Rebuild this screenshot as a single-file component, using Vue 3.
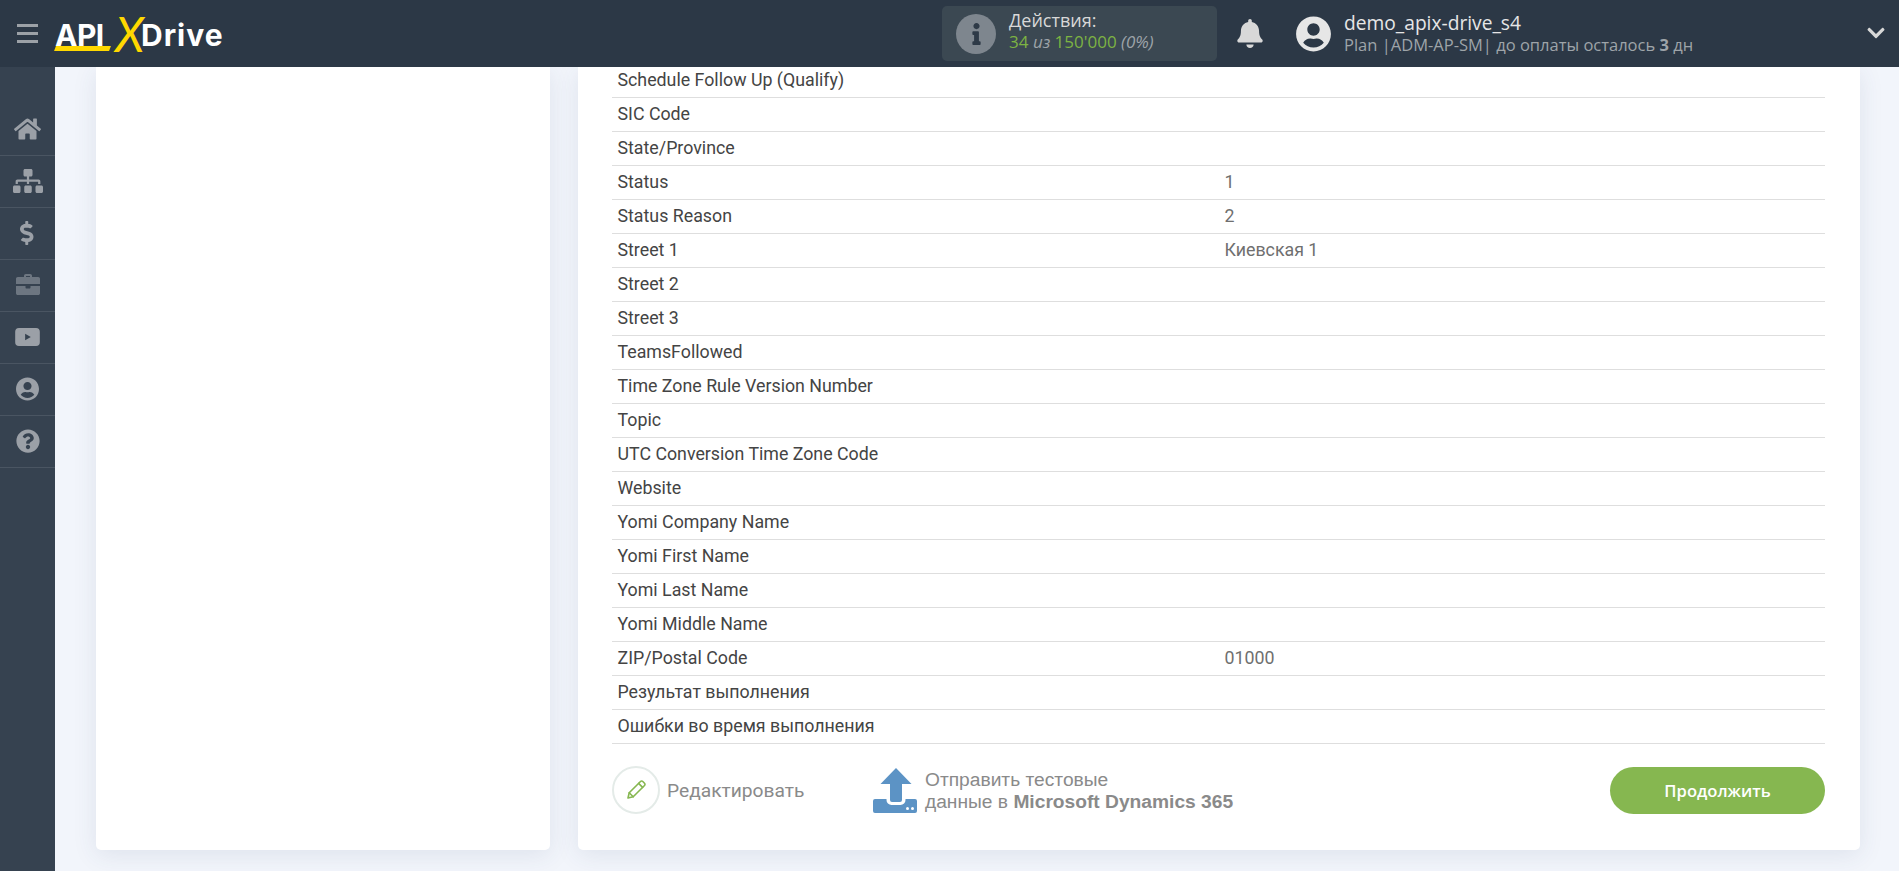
<template>
  <div class="app">
    <header class="topbar">
      <div class="burger"><span></span><span></span><span></span></div>
      <div class="logo">
        <span class="logo-api">API</span>
        <span class="logo-x">X</span>
        <span class="logo-drive">Drive</span>
        <i class="logo-bar"></i>
      </div>
      <div class="actions">
        <div class="actions-icon">
          <svg viewBox="0 0 192 512" width="9" height="22"><path fill="#2e3a47" d="M20 424.229h20V279.771H20c-11.046 0-20-8.954-20-20V212c0-11.046 8.954-20 20-20h112c11.046 0 20 8.954 20 20v212.229h20c11.046 0 20 8.954 20 20V492c0 11.046-8.954 20-20 20H20c-11.046 0-20-8.954-20-20v-47.771c0-11.046 8.954-20 20-20zM96 0C56.235 0 24 32.235 24 72s32.235 72 72 72 72-32.235 72-72S135.764 0 96 0z"/></svg>
        </div>
        <div class="actions-text">
          <div class="actions-title">Действия:</div>
          <div class="actions-count"><b>34</b> <em>из</em> <b>150'000</b> <em>(0%)</em></div>
        </div>
      </div>
      <svg class="bell" viewBox="0 0 448 512" width="26" height="29"><path fill="#d8d8d8" d="M224 512c35.32 0 63.97-28.65 63.97-64H160.03c0 35.35 28.65 64 63.97 64zm215.39-149.71c-19.32-20.76-55.47-51.99-55.47-154.29 0-77.7-54.48-139.9-127.94-155.16V32c0-17.67-14.32-32-31.98-32s-31.98 14.33-31.98 32v20.84C118.56 68.1 64.08 130.3 64.08 208c0 102.3-36.15 133.53-55.47 154.29-6 6.45-8.66 14.16-8.61 21.71.11 16.4 12.98 32 32.1 32h383.8c19.12 0 32-15.6 32.1-32 .05-7.55-2.61-15.27-8.61-21.71z"/></svg>
      <svg class="avatar" viewBox="0 0 496 512" width="35" height="36"><path fill="#e6e6e6" :d="userPath"/></svg>
      <div class="user">
        <div class="user-name">demo_apix-drive_s4</div>
        <div class="user-plan">Plan |ADM-AP-SM| до оплаты осталось <b>3</b> дн</div>
      </div>
      <svg class="chevron" viewBox="0 0 448 512" width="18" height="20"><path fill="#d8d8d8" d="M207 381.5L12.7 187.1c-9.4-9.4-9.4-24.6 0-33.9l22.7-22.7c9.4-9.4 24.5-9.4 33.9 0L224 284.5l154.7-154c9.4-9.3 24.5-9.3 33.9 0l22.7 22.7c9.4 9.4 9.4 24.6 0 33.9L241 381.5c-9.4 9.4-24.6 9.4-34 0z"/></svg>
    </header>

    <div class="body">
      <nav class="sidebar">
        <div v-for="item in menu" :key="item.name" class="side-item" :class="{ dim: item.dim }">
          <svg :viewBox="item.box" :width="item.w" :height="item.h" v-html="item.svg"></svg>
        </div>
      </nav>

      <main class="main">
        <section class="card card-left"></section>
        <section class="card card-right">
          <div class="rows">
            <div v-for="row in rows" :key="row[0]" class="row">
              <div class="row-name">{{ row[0] }}</div>
              <div class="row-value">{{ row[1] }}</div>
            </div>
          </div>
          <div class="footer">
            <div class="edit">
              <div class="edit-circle">
                <svg viewBox="0 0 24 24" width="24" height="24" fill="none" stroke="#86b750" stroke-width="1.6" stroke-linejoin="round" stroke-linecap="round">
                  <path d="M4 20l1.2-5.2L16.5 3.5a1.6 1.6 0 0 1 2.3 0l1.7 1.7a1.6 1.6 0 0 1 0 2.3L9.2 18.8z"/>
                  <path d="M14.6 5.4l4 4M5.2 14.8l4 4"/>
                </svg>
              </div>
              <span>Редактировать</span>
            </div>
            <div class="send">
              <svg viewBox="0 0 44 45" width="44" height="45">
                <path fill="#5c93c5" d="M23 0l15.500 16H29v16a2 2 0 0 1-2 2h-8a2 2 0 0 1-2-2V16H7.500z"/>
                <path fill="#5c93c5" d="M2 31h11.500v1a5 5 0 0 0 5 5h9a5 5 0 0 0 5-5v-1H42a2 2 0 0 1 2 2v10a2 2 0 0 1-2 2H2a2 2 0 0 1-2-2V33a2 2 0 0 1 2-2z"/>
                <circle cx="34.500" cy="40.500" r="1.500" fill="#fff"/><circle cx="39.500" cy="40.500" r="1.500" fill="#fff"/>
              </svg>
              <div class="send-text">Отправить тестовые<br />данные в <b>Microsoft Dynamics 365</b></div>
            </div>
            <button class="next">Продолжить</button>
          </div>
        </section>
      </main>
    </div>
  </div>
</template>

<script setup>
const userPath =
  "M248 8C111 8 0 119 0 256s111 248 248 248 248-111 248-248S385 8 248 8zm0 96c48.6 0 88 39.4 88 88s-39.4 88-88 88-88-39.4-88-88 39.4-88 88-88zm0 344c-58.7 0-111.3-26.6-146.5-68.2 18.8-35.4 55.6-59.8 98.5-59.8 2.4 0 4.8.4 7.1 1.1 13 4.2 26.6 6.9 40.9 6.9 14.3 0 28-2.7 40.9-6.9 2.3-.7 4.7-1.1 7.1-1.1 42.9 0 79.7 24.4 98.5 59.8C359.3 421.4 306.7 448 248 448z";

const menu = [
  {
    name: "home", box: "0 0 576 512", w: 27, h: 24,
    svg: '<path fill="currentColor" d="M280.37 148.26L96 300.11V464a16 16 0 0 0 16 16l112.06-.29a16 16 0 0 0 15.92-16V368a16 16 0 0 1 16-16h64a16 16 0 0 1 16 16v95.64a16 16 0 0 0 16 16.05L464 480a16 16 0 0 0 16-16V300L295.67 148.26a12.19 12.19 0 0 0-15.3 0zM571.6 251.47L488 182.56V44.05a12 12 0 0 0-12-12h-56a12 12 0 0 0-12 12v72.61L318.47 43a48 48 0 0 0-61 0L4.34 251.47a12 12 0 0 0-1.6 16.9l25.5 31A12 12 0 0 0 45.15 301l235.22-193.74a12.19 12.19 0 0 1 15.3 0L530.9 301a12 12 0 0 0 16.9-1.6l25.5-31a12 12 0 0 0-1.7-16.93z"/>',
  },
  {
    name: "sitemap", box: "0 0 640 512", w: 30, h: 24,
    svg: '<path fill="currentColor" d="M128 352H32c-17.67 0-32 14.33-32 32v96c0 17.67 14.33 32 32 32h96c17.67 0 32-14.33 32-32v-96c0-17.67-14.33-32-32-32zm-24-80h192v48h48v-48h192v48h48v-57.59c0-21.17-17.23-38.41-38.41-38.41H344v-64h40c17.67 0 32-14.33 32-32V32c0-17.67-14.33-32-32-32H256c-17.67 0-32 14.33-32 32v96c0 17.67 14.33 32 32 32h40v64H94.41C73.23 224 56 241.23 56 262.41V320h48v-48zm264 80h-96c-17.67 0-32 14.33-32 32v96c0 17.67 14.33 32 32 32h96c17.67 0 32-14.33 32-32v-96c0-17.67-14.33-32-32-32zm240 0h-96c-17.67 0-32 14.33-32 32v96c0 17.67 14.33 32 32 32h96c17.67 0 32-14.33 32-32v-96c0-17.67-14.33-32-32-32z"/>',
  },
  {
    name: "billing", box: "0 0 320 512", w: 15, h: 24,
    svg: '<path fill="currentColor" d="M209.2 233.4l-108-31.6C88.7 198.2 80 186.5 80 173.5c0-16.3 13.2-29.5 29.5-29.5h66.3c12.2 0 24.2 3.7 34.2 10.5 6.1 4.1 14.3 3.1 19.5-2l34.8-34c7.1-6.9 6.1-18.4-1.8-24.5C238 74.8 207.4 64.1 176 64V16c0-8.8-7.2-16-16-16h-32c-8.8 0-16 7.2-16 16v48h-2.5C45.8 64-5.4 118.7.5 183.6c4.2 46.1 39.4 83.6 83.8 96.6l102.5 30c12.5 3.7 21.2 15.3 21.2 28.3 0 16.3-13.2 29.5-29.5 29.5h-66.3C100 368 88 364.3 78 357.5c-6.1-4.1-14.3-3.1-19.5 2l-34.8 34c-7.1 6.9-6.1 18.4 1.8 24.5 24.5 19.2 55.1 29.9 86.5 30v48c0 8.8 7.2 16 16 16h32c8.8 0 16-7.2 16-16v-48.2c46.6-.9 90.3-28.6 105.7-72.7 21.5-61.6-14.6-124.8-72.5-141.7z"/>',
  },
  {
    name: "case", box: "0 0 24 21", w: 24, h: 21, dim: true,
    svg: '<path fill="currentColor" d="M8 3V1.8C8 .8 8.8 0 9.8 0h4.4c1 0 1.8.8 1.8 1.8V3h6.2c1 0 1.8.8 1.8 1.8V10H0V4.800C0 3.800.8 3 1.800 3zm2-1v1h4V2zM0 12h9.500v1.500c0 .5.400 1 1 1h3c.6 0 1-.5 1-1V12H24v7.200c0 1-.8 1.800-1.800 1.800H1.800C.8 21 0 20.200 0 19.200z"/>',
  },
  {
    name: "video", box: "0 0 26 19", w: 25, h: 18,
    svg: '<path fill="currentColor" fill-rule="evenodd" d="M4 0h18a4 4 0 0 1 4 4v11a4 4 0 0 1-4 4H4a4 4 0 0 1-4-4V4a4 4 0 0 1 4-4zm6.500 6v7l6-3.500z"/>',
  },
  {
    name: "profile", box: "0 0 496 512", w: 23, h: 24,
    svg: '<path fill="currentColor" d="' + userPath + '"/>',
  },
  {
    name: "help", box: "0 0 512 512", w: 24, h: 24,
    svg: '<path fill="currentColor" d="M504 256c0 136.997-111.043 248-248 248S8 392.997 8 256C8 119.083 119.043 8 256 8s248 111.083 248 248zM262.655 90c-54.497 0-89.255 22.957-116.549 63.758-3.536 5.286-2.353 12.415 2.715 16.258l34.699 26.31c5.205 3.947 12.621 3.008 16.665-2.122 17.864-22.658 30.113-35.797 57.303-35.797 20.429 0 45.698 13.148 45.698 32.958 0 14.976-12.363 22.667-32.534 33.976C247.128 238.528 216 254.941 216 296v4c0 6.627 5.373 12 12 12h56c6.627 0 12-5.373 12-12v-1.333c0-28.462 83.186-29.647 83.186-106.667 0-58.002-60.165-102-116.531-102zM256 338c-25.365 0-46 20.635-46 46 0 25.364 20.635 46 46 46s46-20.636 46-46c0-25.365-20.635-46-46-46z"/>',
  },
];

const rows = [
  ["Schedule Follow Up (Qualify)", ""],
  ["SIC Code", ""],
  ["State/Province", ""],
  ["Status", "1"],
  ["Status Reason", "2"],
  ["Street 1", "Киевская 1"],
  ["Street 2", ""],
  ["Street 3", ""],
  ["TeamsFollowed", ""],
  ["Time Zone Rule Version Number", ""],
  ["Topic", ""],
  ["UTC Conversion Time Zone Code", ""],
  ["Website", ""],
  ["Yomi Company Name", ""],
  ["Yomi First Name", ""],
  ["Yomi Last Name", ""],
  ["Yomi Middle Name", ""],
  ["ZIP/Postal Code", "01000"],
  ["Результат выполнения", ""],
  ["Ошибки во время выполнения", ""],
];
</script>

<style>
html,
body {
  margin: 0;
  overflow: hidden;
}
</style>

<style scoped>
.app {
  width: 1899px;
  height: 871px;
  display: flex;
  flex-direction: column;
  overflow: hidden;
  background: #f2f5fb;
  font-family: "Roboto", sans-serif;
}

.topbar {
  height: 67px;
  flex: none;
  display: flex;
  align-items: center;
  background: #2c3846;
  position: relative;
  z-index: 2;
}

.burger {
  width: 21px;
  margin-left: 17px;
  display: flex;
  flex-direction: column;
  gap: 5px;
}
.burger span {
  height: 3px;
  background: #9ca1a7;
}

.logo {
  position: relative;
  width: 170px;
  height: 48px;
  margin-left: 17px;
  font-family: "Inter", sans-serif;
  font-weight: 700;
  color: #fff;
  font-size: 30px;
  line-height: 48px;
  white-space: nowrap;
}
.logo-api {
  position: absolute;
  left: 0;
  top: 1px;
  letter-spacing: -0.5px;
}
.logo-x {
  position: absolute;
  left: 60px;
  top: 0;
  color: #ffd800;
  font-size: 48px;
  font-weight: 400;
  font-family: "Lato", sans-serif;
  font-style: italic;
}
.logo-drive {
  position: absolute;
  left: 86px;
  top: 1px;
  letter-spacing: 1px;
}
.logo-bar {
  position: absolute;
  left: 0;
  top: 36px;
  width: 55px;
  height: 5px;
  background: #ffd800;
  transform: skewX(-20deg);
}

.actions {
  width: 275px;
  height: 55px;
  margin-left: 717px;
  box-sizing: border-box;
  padding-left: 14px;
  display: flex;
  align-items: center;
  gap: 13px;
  border-radius: 5px;
  background: #3b4852;
  font-family: "Open Sans", sans-serif;
}
.actions-icon {
  width: 40px;
  height: 40px;
  border-radius: 50%;
  background: #7e868e;
  display: flex;
  align-items: center;
  justify-content: center;
}
.actions-text {
  margin-top: -6px;
}
.actions-title {
  color: #d8d8d8;
  font-size: 18px;
  line-height: 23px;
}
.actions-count {
  color: #9ea4a9;
  font-size: 17px;
  line-height: 20px;
}
.actions-count b {
  color: #7db343;
  font-weight: 400;
}

.bell {
  margin-left: 20px;
}
.avatar {
  margin-left: 33px;
}
.user {
  margin-left: 13px;
  margin-top: -1px;
  font-family: "Open Sans", sans-serif;
}
.user-name {
  color: #e6e6e6;
  font-size: 19.2px;
  line-height: 24px;
}
.user-plan {
  color: #9ea4a9;
  font-size: 16.5px;
  line-height: 20px;
}
.chevron {
  position: absolute;
  right: 14px;
  top: 23px;
}

.body {
  flex: 1;
  min-height: 0;
  display: flex;
}

.sidebar {
  width: 55px;
  flex: none;
  box-sizing: border-box;
  padding-top: 37px;
  background: #364250;
}
.side-item {
  height: 52px;
  box-sizing: border-box;
  padding-bottom: 2px;
  border-bottom: 1px solid #4a5562;
  display: flex;
  align-items: center;
  justify-content: center;
  color: #9ba0a7;
}
.side-item.dim {
  color: #6d7681;
}

.main {
  flex: 1;
  min-width: 0;
  box-sizing: border-box;
  padding: 0 39px 21px 41px;
  display: flex;
  gap: 28px;
}

.card {
  background: #fff;
  border-radius: 0 0 5px 5px;
  box-shadow: 0 5px 25px rgba(50, 70, 110, 0.1);
}
.card-left {
  width: 454px;
  flex: none;
}
.card-right {
  flex: 1;
  min-width: 0;
  box-sizing: border-box;
  padding: 0 35px 0 34px;
  overflow: hidden;
}

.rows {
  margin-top: -3px;
}
.row {
  height: 34px;
  box-sizing: border-box;
  padding: 0 0 2px 5.5px;
  border-bottom: 1px solid #dedede;
  display: flex;
  align-items: center;
  font-size: 17.8px;
}
.row-name {
  width: 607px;
  flex: none;
  color: #444;
}
.row-value {
  color: #6f6f6f;
}

.footer {
  margin-top: 22px;
  display: flex;
  align-items: center;
}
.edit {
  width: 261px;
  display: flex;
  align-items: center;
  gap: 7px;
  color: #8a8a8a;
  font-size: 19.2px;
}
.edit-circle {
  width: 48px;
  height: 48px;
  box-sizing: border-box;
  border: 2px solid #e4ebe8;
  border-radius: 50%;
  display: flex;
  align-items: center;
  justify-content: center;
}
.send {
  display: flex;
  align-items: center;
  gap: 8px;
}
.send-text {
  margin-top: 2px;
  color: #8a8a8a;
  font-family: "Liberation Sans", sans-serif;
  font-size: 19.2px;
  line-height: 22px;
}
.next {
  width: 215px;
  height: 47px;
  margin-left: auto;
  border: 0;
  border-radius: 24px;
  background: #86b750;
  color: #fff;
  font-family: "Open Sans", sans-serif;
  font-size: 16.6px;
  font-weight: 600;
}
</style>
